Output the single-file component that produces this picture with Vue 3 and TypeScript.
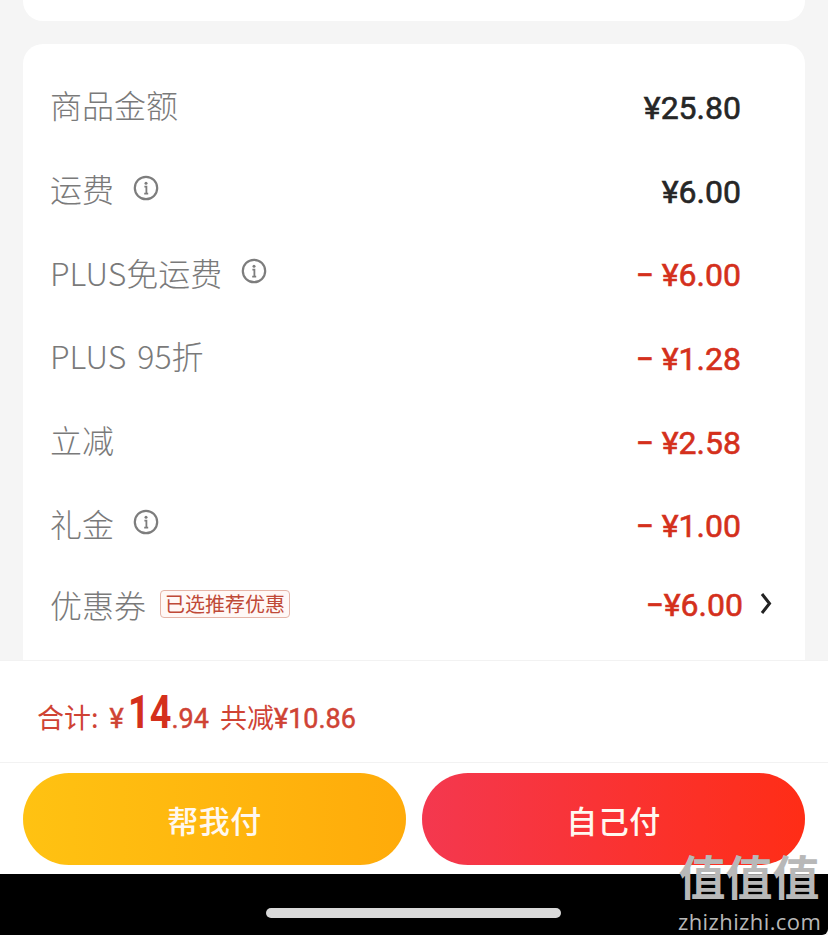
<template>
  <div class="page">
    <div class="scroll">
      <div class="card-top"></div>
      <div class="card">
        <div v-for="row in rows" :key="row.label" class="row">
          <div class="row-left">
            <span class="label">{{ row.label }}</span>
            <svg v-if="row.info" class="info" viewBox="0 0 26 26" fill="none">
              <circle cx="13" cy="13" r="11.2" stroke="#7d7d7d" stroke-width="2.2" />
              <circle cx="13" cy="8.2" r="1.5" fill="#7d7d7d" />
              <path d="M11.4 11.6H13.4V18.4M11.2 18.6H15.2" stroke="#7d7d7d" stroke-width="1.8" />
            </svg>
          </div>
          <span class="amount" :class="{ minus: row.minus }">{{ row.amount }}</span>
        </div>
        <div class="row coupon">
          <div class="row-left">
            <span class="label">优惠券</span>
            <span class="tag">已选推荐优惠</span>
          </div>
          <div class="coupon-right">
            <span class="amount minus">−¥6.00</span>
            <svg class="chevron" viewBox="0 0 12 23" fill="none">
              <path d="M2 2L9.5 11.5L2 21" stroke="#222" stroke-width="3" />
            </svg>
          </div>
        </div>
      </div>
    </div>

    <div class="footer">
      <div class="total">
        <span class="total-label">合计:</span>
        <span class="yen">¥</span><span class="big">14</span><span class="cents">.94</span>
        <span class="saved">共减<b>¥10.86</b></span>
      </div>
      <div class="actions">
        <button class="btn btn-friend">帮我付</button>
        <button class="btn btn-self">自己付</button>
      </div>
    </div>

    <div class="navbar">
      <div class="home-bar"></div>
    </div>

    <div class="watermark">
      <div class="wm-mark">值值值</div>
      <div class="wm-site">zhizhizhi.com</div>
    </div>
  </div>
</template>

<script setup lang="ts">
interface FeeRow {
  label: string;
  amount: string;
  info?: boolean;
  minus?: boolean;
}

const rows: FeeRow[] = [
  { label: '商品金额', amount: '¥25.80' },
  { label: '运费', amount: '¥6.00', info: true },
  { label: 'PLUS免运费', amount: '− ¥6.00', info: true, minus: true },
  { label: 'PLUS 95折', amount: '− ¥1.28', minus: true },
  { label: '立减', amount: '− ¥2.58', minus: true },
  { label: '礼金', amount: '− ¥1.00', info: true, minus: true },
];
</script>

<style>
html, body { margin: 0; background: #f5f5f5; }
</style>

<style scoped>
.page {
  position: relative; width: 828px; height: 935px; overflow: hidden;
  display: flex; flex-direction: column; background: #f5f5f5;
  font-family: "Noto Sans CJK SC", "Noto Sans", sans-serif;
}
.scroll { height: 660px; flex: none; padding: 0 23px; box-sizing: border-box; overflow: hidden; }
.card-top { height: 21px; background: #fff; border-radius: 0 0 20px 20px; margin-bottom: 23px; }
.card { background: #fff; border-radius: 20px 20px 0 0; padding: 21px 28px 0; height: 616px; box-sizing: border-box; }

.row { height: 83.7px; display: flex; align-items: center; justify-content: space-between; padding-right: 36px; }
.row-left { display: flex; align-items: center; margin-top: -5px; }
.label { font-size: 32px; line-height: 40px; font-weight: 300; color: #7a7a7a; margin-left: -1px; word-spacing: 4px; }
.info { width: 26px; height: 26px; margin-left: 19px; margin-top: -1px; margin-right: 1px; }
.amount {
  font-family: Roboto, "Noto Sans", sans-serif; font-size: 32px; font-weight: 400;
  -webkit-text-stroke: 0.6px currentColor;
  color: #262626; white-space: pre; margin-top: 2px;
}
.amount.minus { color: #d4301c; }

.coupon { padding-right: 5px; margin-top: -5px; }
.coupon .row-left { margin-top: 0; }
.tag {
  margin-left: 14px; padding: 0 4px; height: 28px; line-height: 26px; box-sizing: border-box;
  border: 1px solid #e5b5a8; border-radius: 4px; background: #fff8f6;
  font-size: 20px; color: #bf4a38;
}
.coupon-right { display: flex; align-items: center; gap: 17px; }
.chevron { width: 12px; height: 23px; }

.footer { flex: none; height: 214px; background: #fff; border-top: 1px solid #f2f2f2; box-sizing: border-box; display: flex; flex-direction: column; }
.total {
  height: 102px; flex: none; box-sizing: border-box; padding: 21px 0 0 37px; display: flex; align-items: baseline;
  border-bottom: 1px solid #f2f2f2; color: #cf4334; font-size: 27px; line-height: 60px;
}
.total-label { margin-right: 11px; }
.yen, .cents { font-family: Roboto, sans-serif; font-size: 27px; -webkit-text-stroke: 0.5px currentColor; }
.yen { margin-right: 4px; }
.big {
  font-family: Roboto, sans-serif; font-size: 46px; font-weight: 700; color: #d4301c;
  transform: scaleX(0.82); transform-origin: left; margin-right: -9px;
}
.saved { margin-left: 11px; }
.saved b { font-family: Roboto, sans-serif; font-size: 27px; font-weight: 400; -webkit-text-stroke: 0.5px currentColor; }

.actions { display: flex; gap: 16px; padding: 10px 23px 0; }
.btn {
  flex: 1; height: 92px; border: none; border-radius: 46px; color: #fff8f0; padding: 0;
  font-family: "Noto Sans CJK SC", sans-serif; font-size: 31px; font-weight: 500; letter-spacing: 0.5px;
}
.btn-friend { background: linear-gradient(90deg, #ffc212, #ffab0a); }
.btn-self { background: linear-gradient(90deg, #f4384f, #ff2d16); }

.navbar { flex: 1; background: #000; display: flex; justify-content: center; padding-top: 34px; box-sizing: border-box; border-bottom-right-radius: 6px; }
.home-bar { width: 295px; height: 10px; border-radius: 5px; background: #d9d9d9; margin-right: 1px; }

.watermark { position: absolute; left: 678px; top: 845px; width: 142px; text-align: center; color: #b8b8b8; }
.wm-mark { font-size: 47px; line-height: 60px; font-weight: 700; white-space: nowrap; }
.wm-site { font-family: "Open Sans", sans-serif; font-size: 22px; line-height: 28px; letter-spacing: 0.4px; margin-top: 2px; white-space: nowrap; }
</style>
